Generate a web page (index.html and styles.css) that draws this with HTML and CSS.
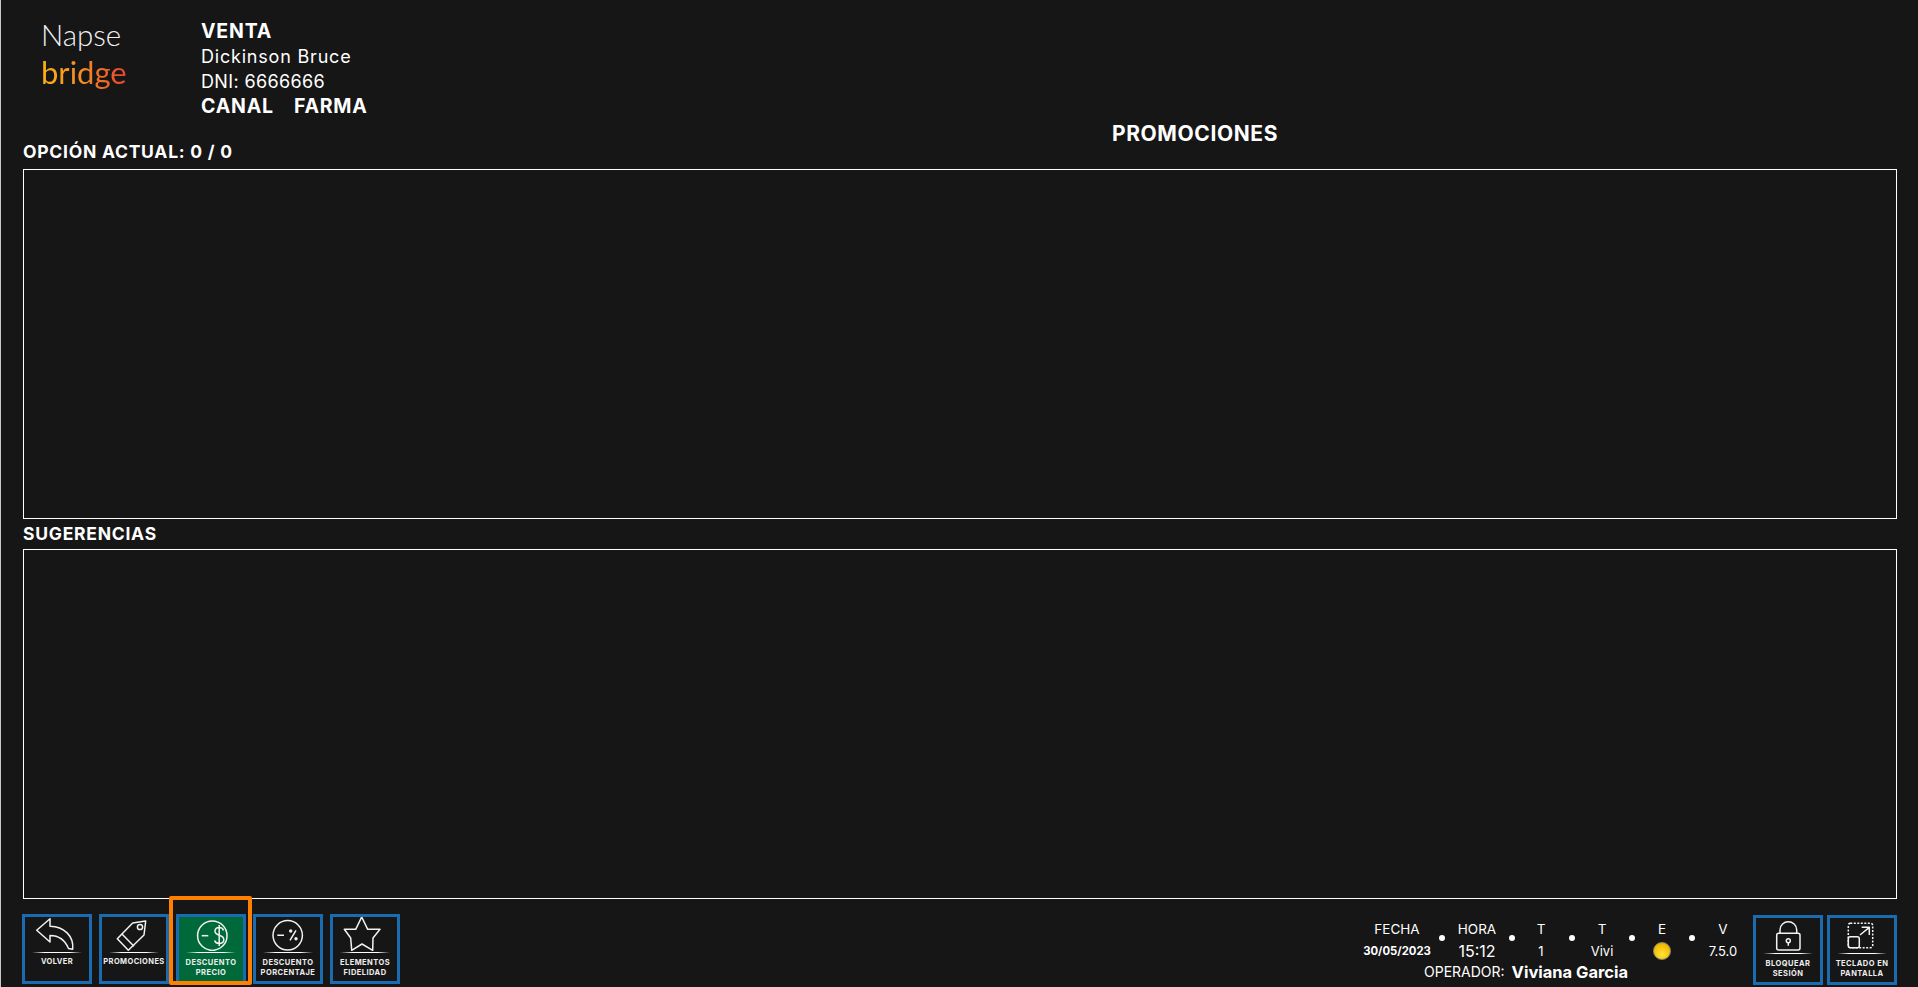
FILE: index.html
```html
<!DOCTYPE html>
<html lang="es">
<head>
  <meta charset="UTF-8" />
  <title>Promociones</title>
  <link rel="stylesheet" href="styles.css">
</head>
<body>

<header class="head">
  <div class="logo">
    <span class="logo-top">Napse</span>
    <span class="logo-bottom">bridge</span>
  </div>
  <div class="info">
    <div class="info-strong">VENTA</div>
    <div>Dickinson Bruce</div>
    <div class="info-dni">DNI: 6666666</div>
    <div class="info-strong"><span class="canal">CANAL</span>FARMA</div>
  </div>
  <h1 class="title">PROMOCIONES</h1>
  <div class="label label-first">OPCIÓN ACTUAL: 0 / 0</div>
</header>

<main>
  <div class="box"></div>
  <div class="label label-second">SUGERENCIAS</div>
  <div class="box"></div>
</main>

<footer class="foot">
  <div class="btn-group">
    <button class="btn">
      <svg class="ico" viewBox="3 3 64 34"><path d="M14.7 16.3 28 4.7v7.6c14 .2 24 9.7 22.7 23l-4.2-.8C43 26 36 21.5 28 21.500V28Z"/></svg>
      <span class="rule"></span>
      <span class="btn-text btn-one">VOLVER</span>
    </button>
    <button class="btn">
      <svg class="ico" viewBox="3 3 64 34"><path d="M33.7 9 46.7 7 45 21 29.3 36.3 18.3 24.7Z"/><path d="M22.7 19.7 35 32.3"/><circle cx="41" cy="13" r="2.6"/></svg>
      <span class="rule"></span>
      <span class="btn-text btn-one">PROMOCIONES</span>
    </button>
    <button class="btn btn-active">
      <svg class="ico" viewBox="3 3 64 34"><circle cx="36.3" cy="21.7" r="14.7"/><path d="M25.7 21.7h6.600"/><path d="M47.500 16.500C47 14.500 45.500 13.500 43.200 13.500 40.500 13.500 39 15 39 17.300 39 22.500 47.800 20 47.800 25.500 47.800 28 45.800 29.500 43.200 29.500 40.800 29.500 39.200 28.400 38.600 26.500M43.200 11V32"/></svg>
      <span class="rule"></span>
      <span class="btn-text">DESCUENTO PRECIO</span>
    </button>
    <button class="btn">
      <svg class="ico" viewBox="3 3 64 34"><circle cx="34.700" cy="21.300" r="14.700"/><path d="M24.300 21.300H31M37 26.300l6-10"/><circle class="ico-fill" cx="37.700" cy="17" r="1.700"/><circle class="ico-fill" cx="43" cy="24.700" r="1.700"/></svg>
      <span class="rule"></span>
      <span class="btn-text">DESCUENTO PORCENTAJE</span>
    </button>
    <button class="btn">
      <svg class="ico" viewBox="3 3 64 34"><path d="M31.700 3 37.700 15.300 50 15.300 43 24 42.700 36.300 32 30 21.700 36.300 20.700 24 14.300 15.300 25.700 15.300Z"/></svg>
      <span class="rule"></span>
      <span class="btn-text">ELEMENTOS FIDELIDAD</span>
    </button>
  </div>

  <div class="foot-right">
    <div class="status">
      <div class="status-row">
        <div class="cell cell-fecha"><span>FECHA</span><span class="date">30/05/2023</span></div>
        <i class="dot"></i>
        <div class="cell cell-hora"><span>HORA</span><span class="time">15:12</span></div>
        <i class="dot"></i>
        <div class="cell cell-t"><span>T</span><span class="small">1</span></div>
        <i class="dot dot-wide"></i>
        <div class="cell cell-n"><span>T</span><span class="small">Vivi</span></div>
        <i class="dot dot-wide"></i>
        <div class="cell cell-n"><span>E</span><span class="sun"></span></div>
        <i class="dot dot-wide"></i>
        <div class="cell cell-t"><span>V</span><span class="small">7.5.0</span></div>
      </div>
      <div class="operator">OPERADOR:<strong>Viviana Garcia</strong></div>
    </div>
    <div class="btn-group btn-group-tight">
      <button class="btn">
        <svg class="ico" viewBox="3 3 64 34"><rect x="23.700" y="18.300" width="23.300" height="16.700" rx="2"/><path d="M27 18.300v-3.600C27 10 31 6.700 35.300 6.700s8.400 3.300 8.400 8v3.600"/><circle cx="35.300" cy="25.800" r="2"/><path d="M35.300 27.800v3"/></svg>
        <span class="rule"></span>
        <span class="btn-text">BLOQUEAR SESIÓN</span>
      </button>
      <button class="btn">
        <svg class="ico" viewBox="3 3 64 34"><rect class="dash" x="21.300" y="8.300" width="24.400" height="24.400" rx="2"/><rect x="21.300" y="21.700" width="11" height="11" rx="2"/><path d="M33 20l9.300-7.700M34.700 12.300h7.600V20"/></svg>
        <span class="rule"></span>
        <span class="btn-text">TECLADO EN PANTALLA</span>
      </button>
    </div>
  </div>
</footer>

</body>
</html>
```

FILE: styles.css
```css
html, body {
  margin: 0;
  padding: 0;
  height: 100%;
  overflow: hidden;
}

body {
  box-sizing: border-box;
  background: #161616;
  border-left: 1px solid #c8c8c8;
  padding: 0 21px;
  color: #fff;
  font-family: Inter, "Liberation Sans", sans-serif;
}

/* Cabecera */
.head {
  display: grid;
  grid-template-columns: 179px 292px 1fr;
  grid-template-rows: 119px 50px;
}

.logo {
  display: flex;
  flex-direction: column;
  align-items: flex-start;
  padding: 17px 0 0 19px;
  font-family: Lato, sans-serif;
}

.logo-top {
  color: #f1f1f1;
  font-size: 29.500px;
  font-weight: 300;
  line-height: 36px;
}

.logo-bottom {
  background: linear-gradient(90deg, #fcb116, #f58a22 50%, #e8432e);
  -webkit-background-clip: text;
  background-clip: text;
  color: transparent;
  font-size: 31px;
  font-weight: 400;
  line-height: 38px;
}

.info {
  padding-top: 19px;
  font-size: 18px;
  line-height: 25px;
  letter-spacing: .8px;
}

.info-dni {
  letter-spacing: .35px;
}

.info-strong {
  font-size: 19.500px;
  font-weight: 700;
  letter-spacing: .8px;
}

.canal {
  margin-right: 20px;
}

.title {
  grid-column: 3;
  grid-row: 1 / 3;
  margin: 123px 0 0;
  font-size: 21px;
  line-height: 22px;
  font-weight: 700;
  letter-spacing: .6px;
  text-align: center;
}

.label {
  margin-left: 1px;
  font-size: 17.500px;
  line-height: 20px;
  font-weight: 700;
  letter-spacing: .75px;
}

.label-first {
  grid-column: 1 / 3;
  grid-row: 2;
  align-self: end;
  margin-bottom: 7px;
}

.label-second {
  padding: 5px 0;
}

.box {
  box-sizing: border-box;
  height: 350px;
  margin-left: 1px;
  border: 1px solid #fff;
}

/* Botonera */
.foot {
  display: flex;
  justify-content: space-between;
  padding-top: 15px;
}

.btn-group {
  display: flex;
  gap: 7px;
}

.btn-group-tight {
  gap: 4px;
  margin-top: 1px;
}

.btn {
  position: relative;
  display: flex;
  flex-direction: column;
  align-items: center;
  box-sizing: border-box;
  width: 70px;
  height: 70px;
  margin: 0;
  padding: 0;
  background: #161616;
  border: 3px solid #1a6bb0;
  color: #fff;
  font-family: inherit;
}

.btn-active {
  background: #00693a;
}

.btn-active::after {
  content: "";
  position: absolute;
  top: -21px;
  left: -10px;
  right: -9px;
  bottom: -4px;
  border: 4px solid #ff8000;
  border-radius: 2px;
}

.ico {
  display: block;
  width: 64px;
  height: 34px;
  flex: none;
  fill: none;
  stroke: #f2f2f2;
  stroke-width: 1.500;
  stroke-linejoin: round;
}

.ico-fill {
  fill: #f2f2f2;
  stroke: none;
}

.dash {
  stroke-dasharray: 2 1.500;
}

.rule {
  flex: none;
  width: 50px;
  height: 1px;
  margin-top: 1px;
  background: linear-gradient(90deg, transparent, #fff 25%, #fff 75%, transparent);
}

.btn-text {
  width: 66px;
  margin: 5px -1px 0;
  font-size: 7.500px;
  line-height: 10px;
  font-weight: 700;
  letter-spacing: .45px;
  text-align: center;
  color: #eee;
}

.btn-one {
  margin-top: 4px;
  letter-spacing: .4px;
}

/* Estado */
.foot-right {
  display: flex;
  align-items: flex-end;
  gap: 11px;
}

.status {
  display: flex;
  flex-direction: column;
  width: 380px;
}

.status-row {
  display: flex;
  align-items: center;
  height: 45px;
}

.cell {
  display: flex;
  flex-direction: column;
  align-items: center;
  height: 45px;
  box-sizing: border-box;
  padding-top: 3px;
  font-size: 13.500px;
  line-height: 22px;
}

.cell-fecha { width: 70px; }
.cell-hora { width: 50px; }
.cell-t { width: 38px; }
.cell-n { width: 36px; }

.date {
  font-size: 11.300px;
  font-weight: 700;
}

.time {
  font-size: 16px;
}

.small {
  font-size: 13px;
}

.sun {
  width: 18px;
  height: 18px;
  margin-top: 2px;
  box-sizing: border-box;
  border: 1px solid #8d8d6a;
  border-radius: 50%;
  background: radial-gradient(circle at 50% 70%, #ffe53a, #f5b800 70%, #d99a00);
}

.dot {
  flex: none;
  width: 6px;
  height: 6px;
  margin: 0 7px;
  border-radius: 50%;
  background: #fff;
}

.dot-wide { margin: 0 9px; }

.operator {
  display: flex;
  align-items: center;
  gap: 7px;
  padding: 0 0 2px 62px;
  height: 23px;
  font-size: 14px;
}

.operator strong {
  font-size: 16.500px;
  font-weight: 700;
}
```
